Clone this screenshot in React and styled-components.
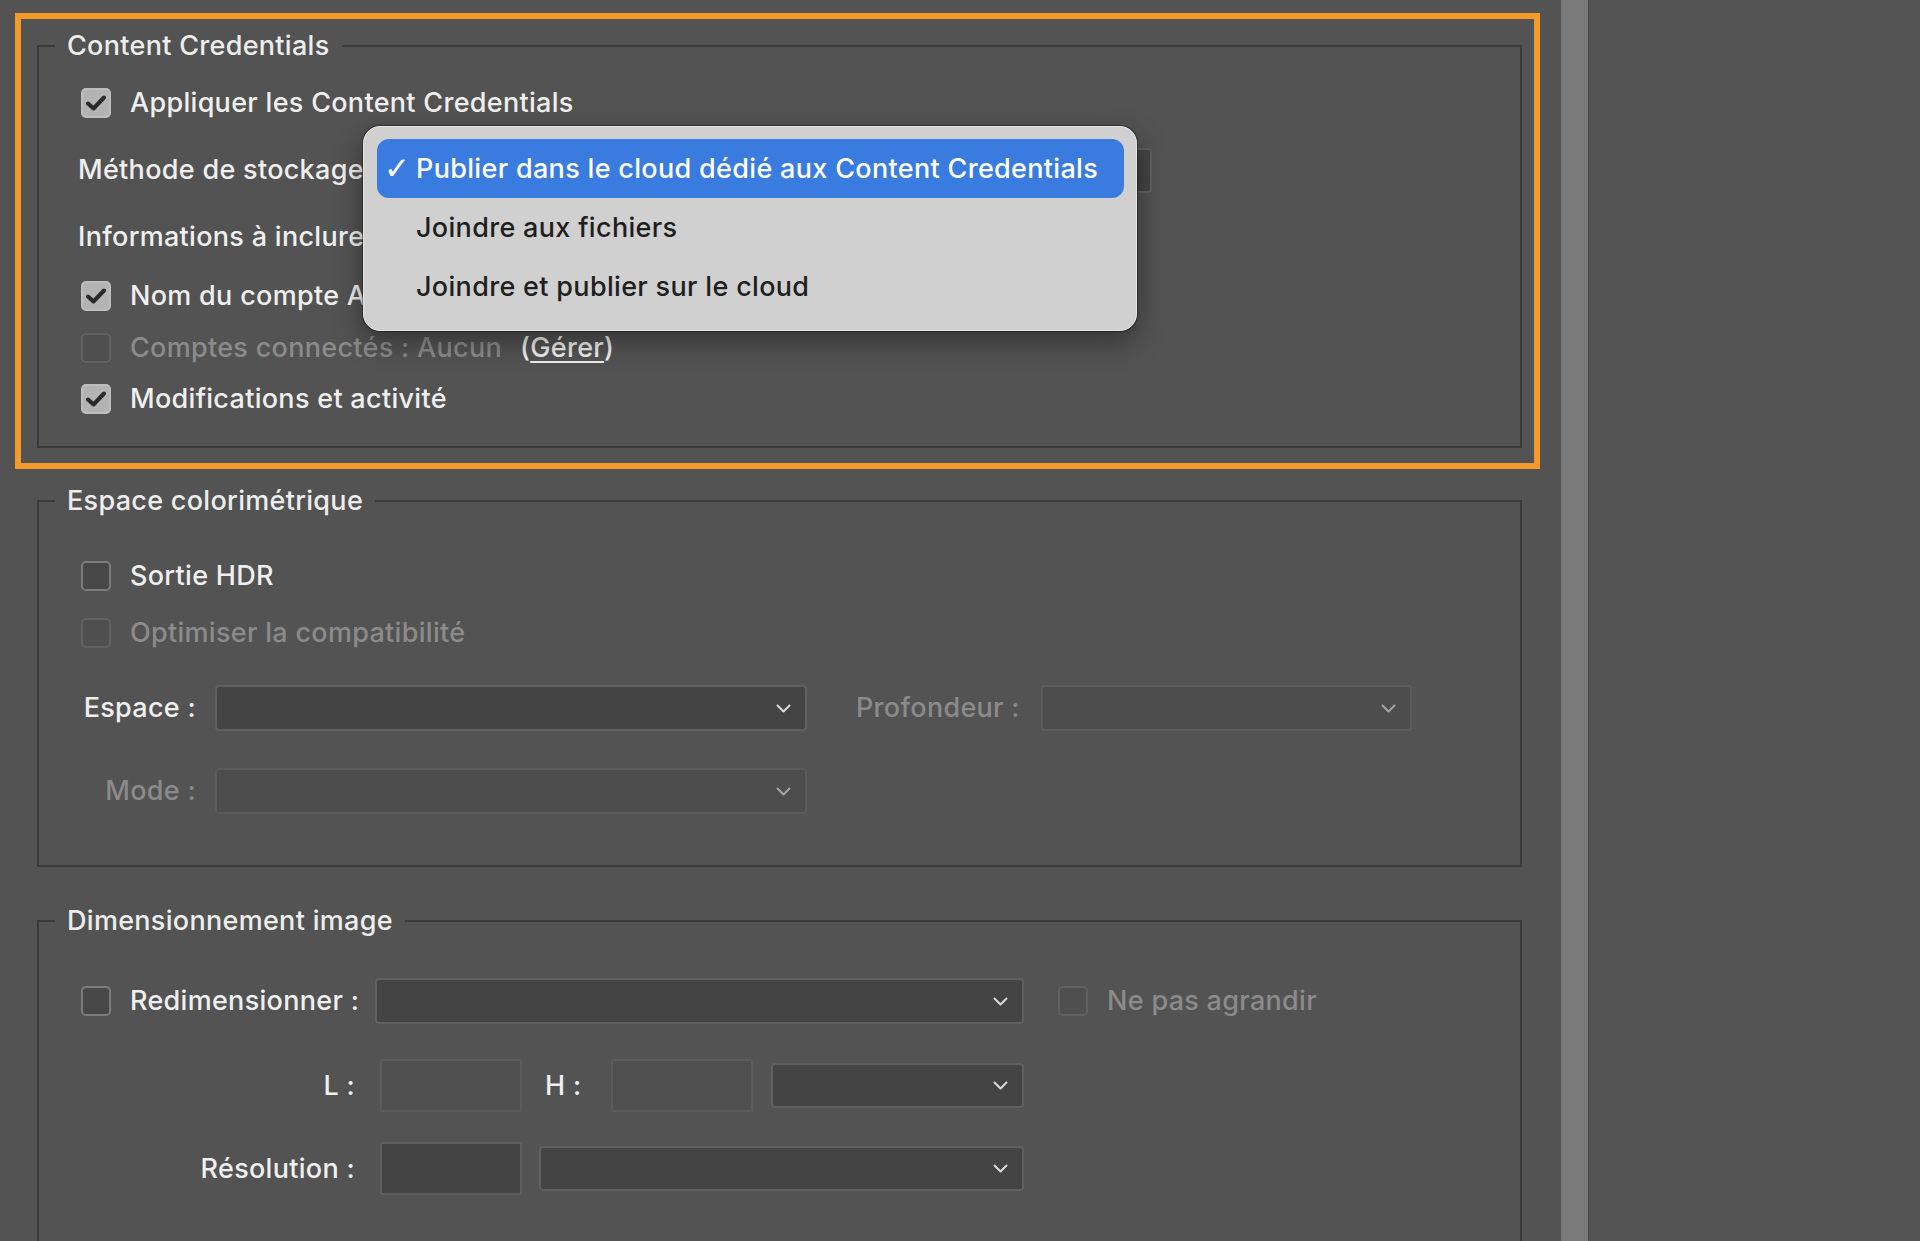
import React from 'react';
import styled, { createGlobalStyle } from 'styled-components';

const GlobalStyle = createGlobalStyle`
  html, body {
    margin: 0;
    padding: 0;
    background: #535353;
  }
  body {
    font-family: Inter, 'Noto Sans', 'DejaVu Sans', sans-serif;
    letter-spacing: 0.3px;
    -webkit-font-smoothing: antialiased;
  }
  * {
    box-sizing: border-box;
  }
`;

const Page = styled.div`
  display: flex;
  height: 100vh;
  overflow: hidden;
  background: #535353;
`;

const Main = styled.div`
  width: 1561px;
  flex: none;
  padding: 13px 21px 0 15px;
`;

const Divider = styled.div`
  width: 28px;
  flex: none;
  background: #7a7a7a;
  border-right: 1px solid #474747;
`;

const Side = styled.div`
  flex: 1;
  background: #545454;
`;

const Highlight = styled.div`
  border: 6px solid #f39a2b;
  padding: 10px 12px 15px 16px;
`;

const Group = styled.fieldset`
  margin: ${p => p.$mt || 0}px ${p => (p.$inset ? '18px' : '0')} 0
    ${p => (p.$inset ? '22px' : '0')};
  padding: 0;
  min-width: 0;
  border: 2px solid #3a3a3a;
`;

const Legend = styled.legend`
  margin-left: 16px;
  padding: 0 12px;
  font-size: 27px;
  font-weight: 500;
  line-height: 34px;
  color: #ededed;
`;

const Body = styled.div`
  padding: ${p => p.$pad};
  display: flex;
  flex-direction: column;
`;

const Row = styled.div`
  display: flex;
  align-items: center;
  height: ${p => p.$h || 40}px;
  margin-top: ${p => p.$mt || 0}px;
  flex: none;
`;

const Text = styled.span`
  font-size: 27px;
  font-weight: 500;
  line-height: 32px;
  white-space: nowrap;
  color: ${p => (p.$off ? '#8b8b8b' : '#efefef')};
`;

const Label = styled(Text)`
  display: inline-block;
  width: ${p => p.$w}px;
  margin-left: ${p => p.$ml || 0}px;
  margin-right: ${p => p.$mr || 0}px;
  text-align: ${p => p.$align || 'left'};
  flex: none;
`;

const Link = styled.span`
  margin-left: 18px;
  font-size: 27px;
  font-weight: 500;
  line-height: 32px;
  color: #efefef;
  span {
    text-decoration: underline;
    text-underline-offset: 4px;
    text-decoration-thickness: 2px;
  }
`;

const Box = styled.span`
  width: 30px;
  height: 30px;
  flex: none;
  border-radius: 5px;
  display: inline-flex;
  align-items: center;
  justify-content: center;
  background: ${p =>
    p.$state === 'checked' ? '#b3b3b3' : p.$state === 'disabled' ? '#4f4f4f' : '#474747'};
  border: 2px solid
    ${p =>
      p.$state === 'checked' ? '#bdbdbd' : p.$state === 'disabled' ? '#616161' : '#7c7c7c'};
`;

const CheckField = styled.label`
  display: flex;
  align-items: center;
  gap: 19px;
  width: ${p => (p.$w ? `${p.$w}px` : 'auto')};
  margin-left: ${p => p.$ml || 0}px;
  flex: none;
`;

const SelectBox = styled.div`
  position: relative;
  width: ${p => p.$w}px;
  height: ${p => p.$h || 46}px;
  margin-left: ${p => p.$ml || 0}px;
  flex: none;
  border-radius: 4px;
  background: ${p => (p.$off ? '#4d4d4d' : '#444444')};
  border: 2px solid ${p => (p.$off ? '#5b5b5b' : '#606060')};
  display: flex;
  align-items: center;
  justify-content: flex-end;
  padding-right: 14px;
  color: ${p => (p.$off ? '#a4a4a4' : '#dadada')};
`;

const Field = styled.div`
  width: 142px;
  height: 53px;
  margin-left: ${p => p.$ml || 0}px;
  flex: none;
  border-radius: 2px;
  background: ${p => (p.$off ? '#505050' : '#444444')};
  border: 2px solid ${p => (p.$off ? '#5c5c5c' : '#5e5e5e')};
`;

const Menu = styled.div`
  position: absolute;
  top: -24px;
  left: -9px;
  width: 774px;
  z-index: 5;
  padding: 12px 12px 14px 13px;
  border-radius: 17px;
  background: #d0d0d0;
  border: 1px solid #e6e6e6;
  box-shadow: 0 0 0 1px rgba(0, 0, 0, 0.35), 0 10px 28px rgba(0, 0, 0, 0.4);
  display: flex;
  flex-direction: column;
`;

const MenuItem = styled.div`
  height: 59px;
  display: flex;
  align-items: center;
  padding-left: 7px;
  border-radius: 12px;
  background: ${p => (p.$active ? '#3a7be0' : 'transparent')};
  color: ${p => (p.$active ? '#ffffff' : '#1f1f1f')};
  font-size: 27px;
  font-weight: 500;
  letter-spacing: 0.32px;
  white-space: nowrap;
`;

const Tick = styled.span`
  width: 32px;
  flex: none;
  font-family: 'DejaVu Sans', sans-serif;
  font-size: 31px;
  font-weight: 700;
  line-height: 1;
`;

function CheckMark() {
  return (
    <svg width="20" height="16" viewBox="0 0 20 16">
      <path d="M2 8.5 L7.5 13.5 L18 2.5" fill="none" stroke="#2a2a2a" strokeWidth="4" strokeLinecap="round" strokeLinejoin="round" />
    </svg>
  );
}

function Chevron() {
  return (
    <svg width="15" height="9" viewBox="0 0 15 9">
      <polyline points="1.5,1.5 7.5,7.5 13.5,1.5" fill="none" stroke="currentColor" strokeWidth="2" strokeLinecap="round" strokeLinejoin="round" />
    </svg>
  );
}

function Check({ state = 'unchecked', label, off, w, ml }) {
  return (
    <CheckField $w={w} $ml={ml}>
      <Box $state={state}>{state === 'checked' && <CheckMark />}</Box>
      <Text $off={off}>{label}</Text>
    </CheckField>
  );
}

function Select({ w, h, ml, off, children }) {
  return (
    <SelectBox $w={w} $h={h} $ml={ml} $off={off}>
      <Chevron />
      {children}
    </SelectBox>
  );
}

const storageOptions = [
  'Publier dans le cloud dédié aux Content Credentials',
  'Joindre aux fichiers',
  'Joindre et publier sur le cloud',
];

export default function App() {
  return (
    <>
      <GlobalStyle />
      <Page>
        <Main>
          <Highlight>
            <Group>
              <Legend>Content Credentials</Legend>
              <Body $pad="20px 0 27px 42px">
                <Row>
                  <Check state="checked" label="Appliquer les Content Credentials" />
                </Row>
                <Row $mt={27} $h={40}>
                  <Label $w={292} $ml={-3}>Méthode de stockage</Label>
                  <Select w={782} h={45}>
                    <Menu>
                      {storageOptions.map((opt, i) => (
                        <MenuItem key={opt} $active={i === 0}>
                          <Tick>{i === 0 ? '✓' : ''}</Tick>
                          {opt}
                        </MenuItem>
                      ))}
                    </Menu>
                  </Select>
                </Row>
                <Row $mt={27}>
                  <Label $ml={-3}>Informations à inclure</Label>
                </Row>
                <Row $mt={19}>
                  <Check state="checked" label="Nom du compte Adobe" />
                </Row>
                <Row $mt={12}>
                  <Check state="disabled" off label="Comptes connectés : Aucun" />
                  <Link>
                    (<span>Gérer</span>)
                  </Link>
                </Row>
                <Row $mt={11}>
                  <Check state="checked" label="Modifications et activité" />
                </Row>
              </Body>
            </Group>
          </Highlight>

          <Group $mt={15} $inset>
            <Legend>Espace colorimétrique</Legend>
            <Body $pad="38px 0 51px 42px">
              <Row>
                <Check label="Sortie HDR" />
              </Row>
              <Row $mt={17}>
                <Check state="disabled" off label="Optimiser la compatibilité" />
              </Row>
              <Row $mt={32} $h={46}>
                <Label $w={115} $mr={19} $align="right">Espace :</Label>
                <Select w={592} />
                <Label $off $ml={49} $mr={21}>Profondeur :</Label>
                <Select w={371} off />
              </Row>
              <Row $mt={37} $h={46}>
                <Label $off $w={115} $mr={19} $align="right">Mode :</Label>
                <Select w={592} off />
              </Row>
            </Body>
          </Group>

          <Group $mt={37} $inset>
            <Legend>Dimensionnement image</Legend>
            <Body $pad="40px 0 80px 42px">
              <Row $h={46}>
                <Check label="Redimensionner :" w={294} />
                <Select w={649} h={46} />
                <Check state="disabled" off label="Ne pas agrandir" ml={34} />
              </Row>
              <Row $mt={35} $h={53}>
                <Label $w={274} $mr={25} $align="right">L :</Label>
                <Field $off />
                <Label $w={37} $ml={23} $align="left">H :</Label>
                <Field $off $ml={29} />
                <Select w={253} h={45} ml={18} />
              </Row>
              <Row $mt={30} $h={53}>
                <Label $w={274} $mr={25} $align="right">Résolution :</Label>
                <Field />
                <Select w={485} h={45} ml={17} />
              </Row>
            </Body>
          </Group>
        </Main>
        <Divider />
        <Side />
      </Page>
    </>
  );
}
